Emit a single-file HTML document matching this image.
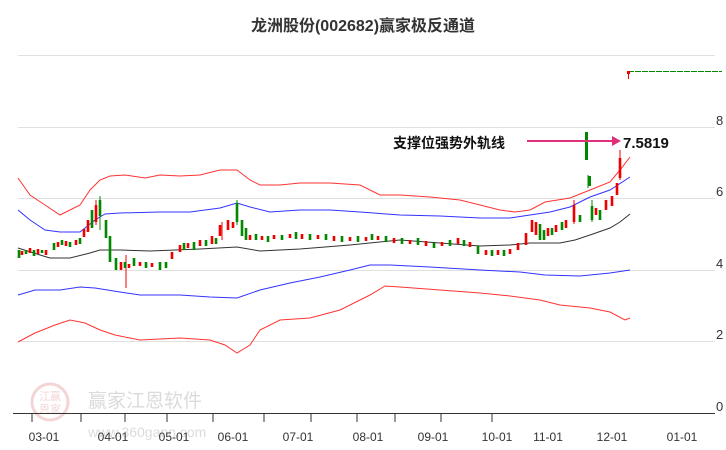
<!DOCTYPE html><html><head><meta charset="utf-8"><style>
body{margin:0;background:#fff;width:726px;height:450px;overflow:hidden;font-family:"Liberation Sans","Noto Sans CJK SC",sans-serif}
</style></head><body>
<svg width="726" height="450" xmlns="http://www.w3.org/2000/svg" style="position:absolute;left:0;top:0">
<text x="363" y="31" text-anchor="middle" font-size="16" font-weight="bold" fill="#333" font-family="Liberation Sans,Noto Sans CJK SC,sans-serif">龙洲股份(002682)赢家极反通道</text>
<g stroke="#e0e0e0" stroke-width="1">
<line x1="18" y1="55.5" x2="715" y2="55.5"/><line x1="18" y1="127.5" x2="715" y2="127.5"/><line x1="18" y1="198.5" x2="715" y2="198.5"/><line x1="18" y1="270.5" x2="715" y2="270.5"/><line x1="18" y1="341.5" x2="715" y2="341.5"/></g>
<g font-size="13" fill="#333" font-family="Liberation Sans,sans-serif">
<text x="716" y="125">8</text><text x="716" y="196">6</text><text x="716" y="268">4</text><text x="716" y="339">2</text><text x="716" y="411">0</text></g>
<g opacity="0.35">
<circle cx="50" cy="402" r="18" fill="none" stroke="#d88" stroke-width="3"/>
<text x="50" y="400" text-anchor="middle" font-size="11" fill="#d88">江赢</text><text x="50" y="413" text-anchor="middle" font-size="11" fill="#d88">恩家</text>
<text x="88" y="407" font-size="19" fill="#999">赢家江恩软件</text>
<text x="88" y="437" font-size="14" fill="#999">www.360gann.com</text></g>
<line x1="13" y1="413.5" x2="715" y2="413.5" stroke="#333"/>
<g stroke="#333"><line x1="32" y1="414" x2="32" y2="422"/><line x1="81" y1="414" x2="81" y2="422"/><line x1="125" y1="414" x2="125" y2="422"/><line x1="167" y1="414" x2="167" y2="422"/><line x1="213" y1="414" x2="213" y2="422"/><line x1="264" y1="414" x2="264" y2="422"/><line x1="311" y1="414" x2="311" y2="422"/><line x1="357" y1="414" x2="357" y2="422"/><line x1="395" y1="414" x2="395" y2="422"/><line x1="441" y1="414" x2="441" y2="422"/><line x1="492" y1="414" x2="492" y2="422"/></g>
<g font-size="12" fill="#333" text-anchor="middle" font-family="Liberation Sans,sans-serif">
<text x="44" y="441">03-01</text><text x="113" y="441">04-01</text><text x="174" y="441">05-01</text><text x="233" y="441">06-01</text><text x="298" y="441">07-01</text><text x="368" y="441">08-01</text><text x="433" y="441">09-01</text><text x="497" y="441">10-01</text><text x="548" y="441">11-01</text><text x="612" y="441">12-01</text><text x="682" y="441">01-01</text></g>
<g fill="none" stroke-width="1">
<polyline stroke="#f33" points="18,178 30,195 45,205 60,215 70,210 80,205 90,190 100,180 110,176 125,175 145,178 160,175 180,176 200,175 220,170 237,170 250,180 260,185 280,185 300,183 330,183 360,185 380,195 400,195 430,197 460,200 480,205 500,210 515,212 530,210 545,202 570,198 590,190 610,182 620,170 630,157"/>
<polyline stroke="#33f" points="18,210 30,220 45,230 60,232 80,232 95,220 105,214 120,213 160,212 190,212 220,208 237,203 250,207 270,212 300,210 330,210 360,212 400,215 440,216 480,218 510,218 530,215 550,212 570,207 590,197 610,190 630,177"/>
<polyline stroke="#333" points="18,248 40,255 50,258 70,258 90,253 100,250 120,250 150,251 175,250 200,249 237,247 260,251 300,249 350,245 400,240 440,243 480,246 510,245 530,243 560,243 575,240 590,235 610,228 620,222 630,214"/>
<polyline stroke="#33f" points="18,295 35,290 60,290 80,287 95,288 120,292 140,295 180,295 210,297 237,298 260,290 290,283 320,277 350,270 370,265 390,265 430,267 480,270 520,272 545,275 580,276 610,273 630,270"/>
<polyline stroke="#f33" points="18,342 35,333 55,325 70,320 85,323 100,330 115,335 140,340 180,338 210,340 225,345 237,353 250,345 260,330 280,320 310,318 340,310 370,295 385,286 400,287 440,290 480,293 510,296 540,300 560,305 590,308 610,312 625,320 630,318"/>
</g>
<path stroke="#e00" stroke-width="1" fill="none" d="M126 255V288 M96 200V225 M222 222V240 M574 200V224 M620 150V180"/>
<path stroke="#080" stroke-width="1" fill="none" d="M100 196V230 M237 200V225 M588 175V188 M592 200V222"/>
<path stroke="#e00" stroke-width="2.6" fill="none" d="M22 251V255 M30 248V253 M38 249V254 M46 250V255 M58 242V247 M66 241V246 M76 240V245 M84 229V237 M88 220V232 M96 205V222 M121 262V270 M129 264V268 M140 262V266 M152 263V267 M172 252V259 M180 245V252 M188 243V248 M200 240V246 M212 236V244 M220 225V236 M228 220V230 M233 222V228 M250 235V240 M262 236V240 M274 235V239 M290 234V238 M302 234V239 M318 235V239 M334 236V241 M350 237V241 M366 237V241 M378 236V240 M394 238V243 M410 240V244 M426 241V246 M442 242V246 M458 238V244 M470 242V247 M486 250V255 M498 250V255 M510 249V254 M518 243V250 M526 233V245 M532 220V232 M536 222V235 M548 228V236 M556 225V232 M566 220V228 M574 205V222 M596 208V215 M606 200V210 M612 196V206 M617 183V195 M620 158V178"/>
<path stroke="#080" stroke-width="2.6" fill="none" d="M19 250V258 M26 250V254 M34 250V256 M42 250V253 M54 243V250 M62 240V245 M70 242V247 M80 238V244 M92 210V228 M100 200V216 M106 220V238 M110 236V262 M116 258V270 M125 262V268 M134 258V266 M146 262V268 M160 262V270 M166 262V268 M184 243V250 M194 242V250 M206 240V246 M216 238V244 M237 203V222 M242 220V236 M246 228V240 M256 234V240 M268 236V242 M282 235V240 M296 232V239 M310 234V240 M326 234V240 M342 236V242 M358 236V242 M372 234V240 M386 236V242 M402 238V244 M418 238V245 M434 243V248 M450 240V246 M464 240V246 M478 246V254 M492 250V256 M504 250V256 M540 224V240 M544 230V240 M552 228V235 M562 222V230 M580 215V222 M592 206V220 M600 210V220"/>
<line x1="628" y1="71.5" x2="722" y2="71.5" stroke="#080" stroke-dasharray="6,1"/>
<rect x="627" y="71" width="3" height="3" fill="#e00"/><line x1="628.5" y1="71" x2="628.5" y2="79" stroke="#e00"/>
<rect x="585" y="132" width="3" height="28" fill="#080"/>
<rect x="588" y="176" width="3" height="10" fill="#080"/>
<text x="393" y="148" font-size="14" font-weight="bold" fill="#111" font-family="Liberation Sans,Noto Sans CJK SC,sans-serif">支撑位强势外轨线</text>
<line x1="527" y1="141" x2="612" y2="141" stroke="#e0307a" stroke-width="2"/>
<polygon points="612,136 621,141 612,146" fill="#e0307a"/>
<text x="623" y="148" font-size="15" font-weight="bold" fill="#111" font-family="Liberation Sans,sans-serif">7.5819</text>
</svg>
</body></html>
